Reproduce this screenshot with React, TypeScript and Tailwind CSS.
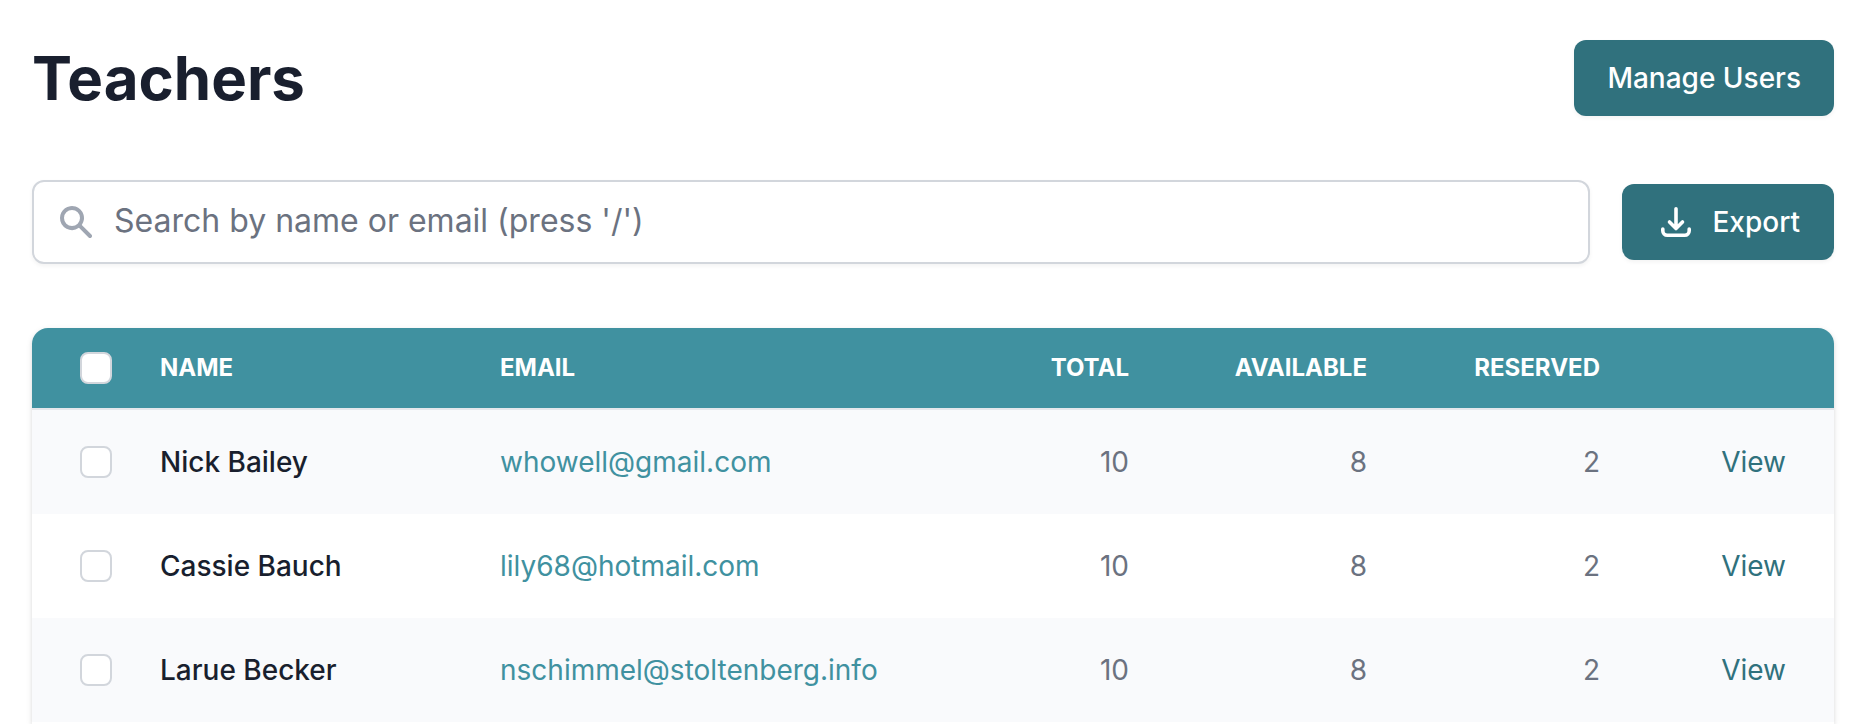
const teachers = [
  { id: 1, name: "Nick Bailey", email: "whowell@gmail.com", total: 10, available: 8, reserved: 2 },
  { id: 2, name: "Cassie Bauch", email: "lily68@hotmail.com", total: 10, available: 8, reserved: 2 },
  { id: 3, name: "Larue Becker", email: "nschimmel@stoltenberg.info", total: 10, available: 8, reserved: 2 },
];

const buttonClass =
  "flex h-[76px] shrink-0 items-center rounded-xl bg-[#30717d] text-[28px] leading-10 font-medium text-white shadow-[0_2px_4px_rgba(0,0,0,0.05)]";
const headClass = "px-12 py-5 text-2xl leading-10 font-bold uppercase";
const cellClass = "px-12 py-8 leading-10";

function SearchIcon() {
  return (
    <svg viewBox="0 0 20 20" fill="currentColor" aria-hidden="true" className="size-10">
      <path
        fillRule="evenodd"
        clipRule="evenodd"
        d="M8 4a4 4 0 100 8 4 4 0 000-8zM2 8a6 6 0 1110.89 3.476l4.817 4.817a1 1 0 01-1.414 1.414l-4.816-4.816A6 6 0 012 8z"
      />
    </svg>
  );
}

function ExportIcon() {
  return (
    <svg
      viewBox="0 0 40 40"
      fill="none"
      stroke="currentColor"
      strokeWidth="3.6"
      strokeLinecap="round"
      strokeLinejoin="round"
      aria-hidden="true"
      className="size-10"
    >
      <path d="M20 6.800V26.500M13.500 20l6.500 6.500 6.500-6.500M6.800 27v1.700a4.500 4.500 0 004.500 4.500h17.400a4.500 4.500 0 004.500-4.500V27" />
    </svg>
  );
}

function Checkbox({ label }: { label: string }) {
  return (
    <input
      type="checkbox"
      aria-label={label}
      className="block size-8 appearance-none rounded-lg border-2 border-[#d2d6dc] bg-white checked:bg-[#30717d]"
    />
  );
}

export default function App() {
  return (
    <main className="flex min-h-screen flex-col bg-white pt-10 pr-[42px] pl-8 font-['Inter',sans-serif] text-[#191f2e]">
      <header className="flex items-center justify-between gap-8">
        <h1 className="text-6xl leading-[76px] font-bold">Teachers</h1>
        <button type="button" className={`${buttonClass} px-[33px]`}>
          Manage Users
        </button>
      </header>

      <div className="mt-16 flex items-center gap-8">
        <div className="relative min-w-0 flex-1">
          <div className="pointer-events-none absolute inset-y-0 left-6 flex items-center text-[#9fa6b2]">
            <SearchIcon />
          </div>
          <input
            type="search"
            aria-label="Search teachers"
            placeholder="Search by name or email (press '/')"
            className="block h-[84px] w-full rounded-xl border-2 border-[#d2d6dc] bg-white pr-6 pb-1 pl-20 text-[32px] leading-[48px] shadow-[0_2px_4px_rgba(0,0,0,0.05)] outline-none placeholder:text-[#6b7280]"
          />
        </div>
        <button type="button" className={`${buttonClass} gap-4 px-[34px]`}>
          <ExportIcon />
          Export
        </button>
      </div>

      <div className="mt-16 flex-1 rounded-t-2xl bg-white shadow-[0_2px_6px_rgba(0,0,0,0.1),0_2px_4px_rgba(0,0,0,0.06)]">
        <table className="w-full table-fixed border-separate border-spacing-0 overflow-hidden rounded-t-2xl text-[28px]">
          <colgroup>
            <col className="w-[80px]" />
            <col className="w-[340px]" />
            <col />
            <col className="w-[238px]" />
            <col className="w-[238px]" />
            <col className="w-[233px]" />
            <col className="w-[186px]" />
          </colgroup>
          <thead className="bg-[#4091a0] text-white [&_th]:border-b-2 [&_th]:border-[#e5e7eb]">
            <tr>
              <th scope="col" className="pl-12">
                <Checkbox label="Select all teachers" />
              </th>
              <th scope="col" className={`${headClass} text-left`}>Name</th>
              <th scope="col" className={`${headClass} text-left`}>Email</th>
              <th scope="col" className={`${headClass} text-right`}>Total</th>
              <th scope="col" className={`${headClass} text-right`}>Available</th>
              <th scope="col" className={`${headClass} text-right`}>Reserved</th>
              <th scope="col" aria-label="Actions" />
            </tr>
          </thead>
          <tbody>
            {teachers.map((t) => (
              <tr key={t.id} className="odd:bg-[#f9fafc]">
                <td className="pl-12">
                  <Checkbox label={`Select ${t.name}`} />
                </td>
                <td className={`${cellClass} font-medium`}>{t.name}</td>
                <td className={cellClass}>
                  <a href={`mailto:${t.email}`} className="text-[#4091a0]">{t.email}</a>
                </td>
                <td className={`${cellClass} text-right text-[#6b7280]`}>{t.total}</td>
                <td className={`${cellClass} text-right text-[#6b7280]`}>{t.available}</td>
                <td className={`${cellClass} text-right text-[#6b7280]`}>{t.reserved}</td>
                <td className={`${cellClass} text-right`}>
                  <a href="#view" aria-label={`View ${t.name}`} className="text-[#30717d]">View</a>
                </td>
              </tr>
            ))}
          </tbody>
        </table>
      </div>
    </main>
  );
}
